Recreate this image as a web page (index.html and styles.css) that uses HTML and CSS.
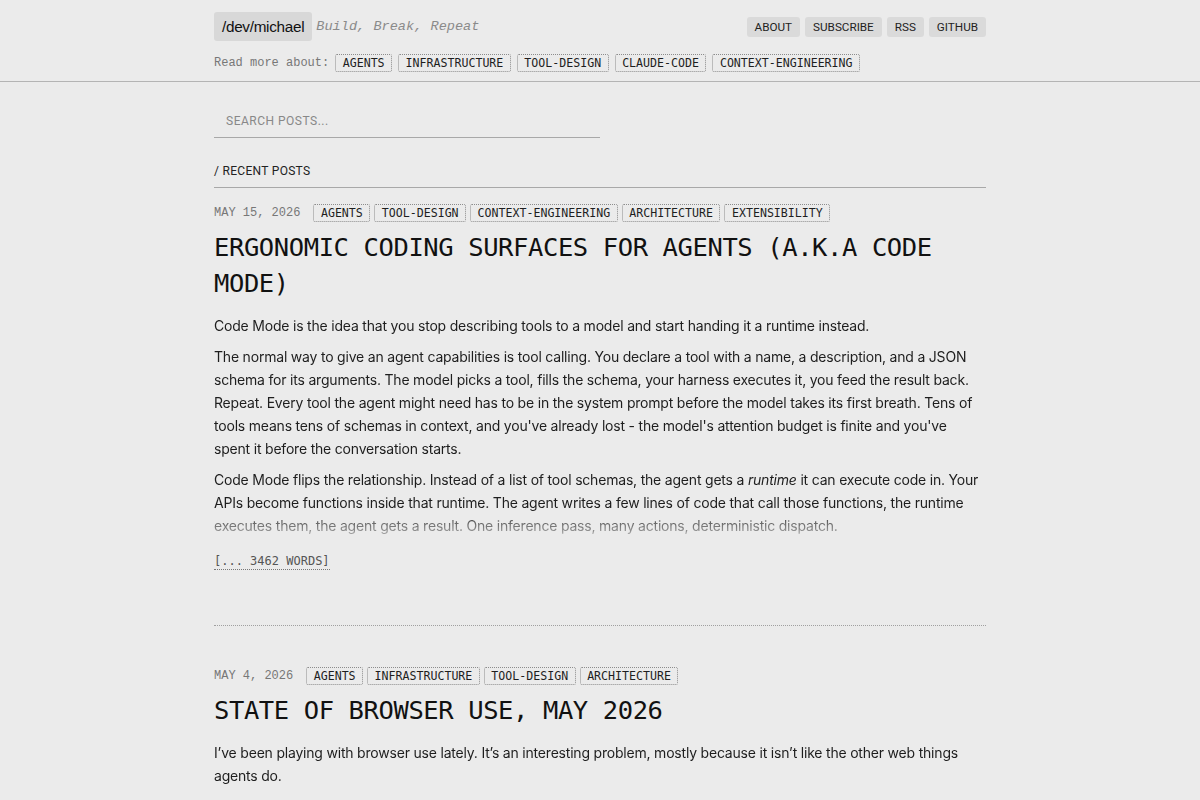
FILE: index.html
```html
<!DOCTYPE html>
<html lang="en">
<head>
    <meta charset="UTF-8">
    <meta name="viewport" content="width=device-width, initial-scale=1.0">
    <title>/dev/michael - Build, Break, Repeat</title>
    <link rel="stylesheet" href="styles.css">
</head>
<body>
    <header class="site-header">
        <div class="wrap">
            <div class="header-top">
                <div class="brand">
                    <a href="/" class="logo">/dev/michael</a>
                    <span class="tagline">Build, Break, Repeat</span>
                </div>
                <nav class="nav">
                    <a href="/about">About</a>
                    <a href="/subscribe">Subscribe</a>
                    <a href="/rss.xml">RSS</a>
                    <a href="https://github.com/">GitHub</a>
                </nav>
            </div>
            <div class="topics">
                <span class="topics-label">Read more about:</span>
                <a href="/tags/agents" class="tag">agents</a>
                <a href="/tags/infrastructure" class="tag">infrastructure</a>
                <a href="/tags/tool-design" class="tag">tool-design</a>
                <a href="/tags/claude-code" class="tag">claude-code</a>
                <a href="/tags/context-engineering" class="tag">context-engineering</a>
            </div>
        </div>
    </header>

    <main class="wrap">
        <div class="search">
            <input type="text" id="search" placeholder="Search posts...">
        </div>

        <h2 class="section-title">/ Recent posts</h2>

        <article class="post">
            <div class="post-meta">
                <time datetime="2026-05-15">May 15, 2026</time>
                <a href="/tags/agents" class="tag">agents</a>
                <a href="/tags/tool-design" class="tag">tool-design</a>
                <a href="/tags/context-engineering" class="tag">context-engineering</a>
                <a href="/tags/architecture" class="tag">architecture</a>
                <a href="/tags/extensibility" class="tag">extensibility</a>
            </div>
            <h1 class="post-title"><a href="/posts/code-mode">Ergonomic coding surfaces for agents (a.k.a code mode)</a></h1>
            <div class="excerpt">
                <p>Code Mode is the idea that you stop describing tools to a model and start handing it a runtime instead.</p>
                <p>The normal way to give an agent capabilities is tool calling. You declare a tool with a name, a description, and a JSON schema for its arguments. The model picks a tool, fills the schema, your harness executes it, you feed the result back. Repeat. Every tool the agent might need has to be in the system prompt before the model takes its first breath. Tens of tools means tens of schemas in context, and you've already lost - the model's attention budget is finite and you've spent it before the conversation starts.</p>
                <p>Code Mode flips the relationship. Instead of a list of tool schemas, the agent gets a <em>runtime</em> it can execute code in. Your APIs become functions inside that runtime. The agent writes a few lines of code that call those functions, the runtime executes them, the agent gets a result. One inference pass, many actions, deterministic dispatch.</p>
            </div>
            <a href="/posts/code-mode" class="read-more">[... 3462 words]</a>
        </article>

        <article class="post">
            <div class="post-meta">
                <time datetime="2026-05-04">May 4, 2026</time>
                <a href="/tags/agents" class="tag">agents</a>
                <a href="/tags/infrastructure" class="tag">infrastructure</a>
                <a href="/tags/tool-design" class="tag">tool-design</a>
                <a href="/tags/architecture" class="tag">architecture</a>
            </div>
            <h1 class="post-title"><a href="/posts/browser-use">State of browser use, May 2026</a></h1>
            <div class="excerpt">
                <p>I’ve been playing with browser use lately. It’s an interesting problem, mostly because it isn’t like the other web things agents do.</p>
                <p>Most agent tools are thin wrappers over an API. Browser use is different: the page is the API, and it was never designed for anyone but a person with a mouse.</p>
            </div>
        </article>
    </main>
</body>
</html>
```

FILE: styles.css
```css
body {
    margin: 0;
    background-color: #ebebeb;
    color: #1e1e1e;
    font-family: Inter, "Noto Sans", sans-serif;
}
a {
    color: inherit;
    text-decoration: none;
}
.wrap {
    width: 772px;
    margin: 0 auto;
}

/* header */
.site-header {
    border-bottom: 1px solid #b4b4b4;
    padding: 12px 0 9px;
}
.header-top {
    display: flex;
    justify-content: space-between;
    align-items: center;
}
.brand {
    display: flex;
    align-items: center;
    gap: 4px;
}
.logo {
    background-color: #d8d8d8;
    border-radius: 3px;
    padding: 0 8px;
    height: 29px;
    line-height: 29px;
    font-family: "Liberation Sans", Arial, sans-serif;
    font-size: 15.3px;
    letter-spacing: -0.3px;
    color: #111;
}
.tagline {
    font-family: "Liberation Mono", monospace;
    font-style: italic;
    font-size: 13.6px;
    color: #8a8a8a;
}
.nav {
    display: flex;
    gap: 5px;
}
.nav a {
    background-color: #dadada;
    border-radius: 3px;
    padding: 0 8px;
    height: 20px;
    line-height: 20px;
    font-family: Roboto, sans-serif;
    font-size: 11.7px;
    text-transform: uppercase;
    color: #222;
}
.topics {
    display: flex;
    align-items: center;
    gap: 6px;
    margin-top: 13px;
}
.topics-label {
    font-family: "Liberation Mono", monospace;
    font-size: 12px;
    color: #777;
}

/* tags */
.tag {
    display: inline-block;
    border: 1px dotted #8c8c8c;
    border-radius: 2px;
    padding: 0 6.5px;
    height: 16px;
    line-height: 16px;
    font-family: "DejaVu Sans Mono", monospace;
    font-size: 11.6px;
    text-transform: uppercase;
    color: #1e1e1e;
}

/* search + heading */
.search {
    margin-top: 23px;
}
.search input {
    width: 386px;
    height: 33px;
    box-sizing: border-box;
    padding: 0 12px;
    border: none;
    border-bottom: 1px solid #a8a8a8;
    background: transparent;
    font-family: Roboto, sans-serif;
    font-size: 12px;
    letter-spacing: 0.5px;
    text-transform: uppercase;
    color: #222;
    outline: none;
}
.search input::placeholder {
    color: #888;
}
.section-title {
    margin: 25px 0 0;
    padding-bottom: 8px;
    border-bottom: 1px solid #a8a8a8;
    font-family: Roboto, sans-serif;
    font-size: 12px;
    font-weight: normal;
    line-height: 16px;
    letter-spacing: 0.3px;
    text-transform: uppercase;
    color: #222;
}

/* posts */
.post {
    padding: 16px 0 55px;
    border-bottom: 1px dotted #a0a0a0;
}
.post + .post {
    padding-top: 41px;
    border-bottom: none;
}
.post-meta {
    display: flex;
    align-items: center;
    gap: 4px;
}
.post-meta time {
    font-family: "Liberation Mono", monospace;
    font-size: 12px;
    text-transform: uppercase;
    color: #777;
    margin-right: 9px;
}
.post-title {
    margin: 7px 0 0;
    font-family: "DejaVu Sans Mono", monospace;
    font-size: 25.5px;
    font-weight: normal;
    line-height: 36px;
    letter-spacing: -0.4px;
    text-transform: uppercase;
    color: #111;
}
.excerpt {
    margin-top: 13px;
    font-size: 14px;
    line-height: 23px;
    letter-spacing: -0.2px;
    -webkit-mask-image: linear-gradient(to bottom, #000 calc(100% - 28px), rgba(0, 0, 0, 0.28) 100%);
    mask-image: linear-gradient(to bottom, #000 calc(100% - 28px), rgba(0, 0, 0, 0.28) 100%);
}
.excerpt p {
    margin: 0 0 8px;
}
.excerpt p:last-child {
    margin-bottom: 0;
}
.read-more {
    display: inline-block;
    margin-top: 16px;
    font-family: "DejaVu Sans Mono", monospace;
    font-size: 12px;
    line-height: 16px;
    text-transform: uppercase;
    color: #555;
    border-bottom: 1px dotted #777;
}
```
